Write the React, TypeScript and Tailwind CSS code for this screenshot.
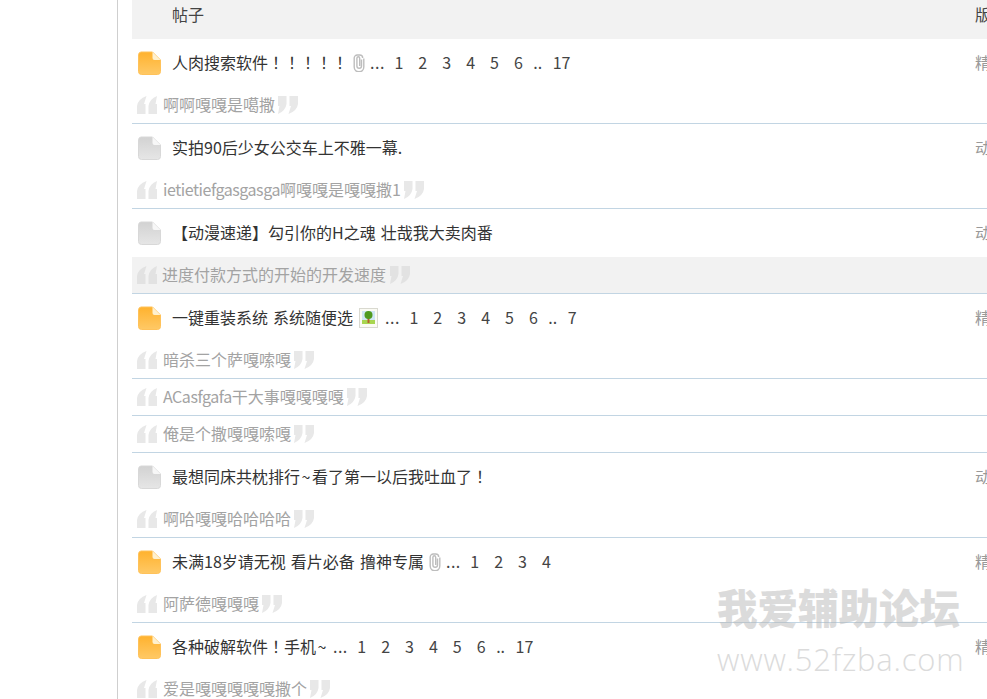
const CJK = "font-['Noto_Sans_CJK_SC','Open_Sans',sans-serif]";

function DocIcon({ hot }: { hot: boolean }) {
  const id = hot ? "docHot" : "docGray";
  return (
    <svg width="23" height="24" viewBox="0 0 23 24" className="shrink-0">
      <defs>
        <linearGradient id={id} x1="0" y1="0" x2="0" y2="1">
          <stop offset="0" stopColor={hot ? "#ffb22e" : "#d2d2d2"} />
          <stop offset="1" stopColor={hot ? "#ffc966" : "#e6e6e6"} />
        </linearGradient>
      </defs>
      <path
        d="M3 1H14.500L22.500 9V20.500a3 3 0 0 1-3 3H3.500a3 3 0 0 1-3-3V3.500a3 3 0 0 1 2.500-2.500Z"
        fill={`url(#${id})`}
        stroke={hot ? "#ffc25a" : "#d8d8d8"}
      />
      <path d="M14.500 1 22.500 9H16.500a2 2 0 0 1-2-2Z" fill={hot ? "#fff1cf" : "#f7f7f7"} />
    </svg>
  );
}

function Clip() {
  return (
    <svg width="12" height="18" viewBox="0 0 12 18" className="shrink-0">
      <path
        d="M8.500 5.500V12a2.300 2.300 0 0 1-4.600 0V4.200a1.400 1.400 0 0 1 2.800 0V12M10.800 4.500V13a4.800 4.800 0 0 1-9.600 0V4a3 3 0 0 1 3-3h2.500a3 3 0 0 1 3 3"
        fill="none"
        stroke="#bdbdbd"
        strokeWidth="1.4"
      />
    </svg>
  );
}

function ImageIcon() {
  return (
    <svg width="19" height="20" viewBox="0 0 19 20" className="shrink-0">
      <rect x=".5" y=".5" width="18" height="19" fill="#fbfbf4" stroke="#d9d9d0" />
      <rect x="3" y="3" width="13" height="9" fill="#cfe6f5" />
      <rect x="3" y="12" width="13" height="4" fill="#a8d64f" />
      <rect x="8.500" y="10" width="2" height="5" fill="#b5622a" />
      <circle cx="9.500" cy="7" r="4" fill="#4f9a1f" />
    </svg>
  );
}

function Quote({ close, tone }: { close?: boolean; tone: string }) {
  return (
    <svg width="20" height="18" viewBox="0 0 20 18" className={close ? "shrink-0 rotate-180" : "shrink-0"}>
      <path d="M0 18V10Q1 3 9.500 0L7 8H8.500V18Z" fill={tone} />
      <path d="M11.500 18V10Q12.500 3 20 0L18.500 8H20V18Z" fill={tone} />
    </svg>
  );
}

function CommentText({ text }: { text: string }) {
  return (
    <>
      {text.split(/([A-Za-z]+)/).map((part, i) =>
        /^[A-Za-z]+$/.test(part) ? (
          <span key={i} className="tracking-[-0.45px]">
            {part}
          </span>
        ) : (
          part
        )
      )}
    </>
  );
}

function Comment({ text, active }: { text: string; active?: boolean }) {
  const tone = active ? "#e2e2e2" : "#e8e8e8";
  return (
    <div
      className={`flex h-[37px] items-center border-b border-[#c2d5e3] pl-[5px] text-[16px] leading-none text-[#a3a3a3] ${
        active ? "bg-[#f2f2f2]" : ""
      }`}
    >
      <Quote tone={tone} />
      <span className={active ? "ml-[5px] mr-[4px] pb-[2px]" : "ml-[6px] mr-[3px] pb-[2px]"}>
        <CommentText text={text} />
      </span>
      <Quote close tone={tone} />
    </div>
  );
}

function Title({ text }: { text: string }) {
  return (
    <span className="whitespace-pre [word-spacing:1.5px]">
      {text.split(/([！~])/).map((part, i) =>
        part === "！" ? (
          <span key={i} className="font-['Noto_Sans_CJK_TC',sans-serif]">
            {part}
          </span>
        ) : part === "~" ? (
          <span key={i} className="mx-[1.5px]">
            {part}
          </span>
        ) : (
          part
        )
      )}
    </span>
  );
}

function Pages({ items }: { items: string[] }) {
  return (
    <span className="flex items-center text-[#444]">
      {items.map((p, i) =>
        p === "..." ? (
          <span key={i} className="ml-[5px] mr-[2px] tracking-[0.5px]">
            {p}
          </span>
        ) : p === ".." ? (
          <span key={i} className="mx-[3px]">
            {p}
          </span>
        ) : (
          <span key={i} className="px-[7.5px]">
            {p}
          </span>
        )
      )}
    </span>
  );
}

type Row = {
  hot: boolean;
  title: string;
  extra?: "clip" | "image";
  pages?: string[];
  tag: string;
  comments: { text: string; active?: boolean }[];
};

const rows: Row[] = [
  {
    hot: true,
    title: "人肉搜索软件！！！！！",
    extra: "clip",
    pages: ["...", "1", "2", "3", "4", "5", "6", "..", "17"],
    tag: "精",
    comments: [{ text: "啊啊嘎嘎是噶撒" }],
  },
  { hot: false, title: "实拍90后少女公交车上不雅一幕.", tag: "动", comments: [{ text: "ietietiefgasgasga啊嘎嘎是嘎嘎撒1" }] },
  {
    hot: false,
    title: "【动漫速递】勾引你的H之魂 壮哉我大卖肉番",
    tag: "动",
    comments: [{ text: "进度付款方式的开始的开发速度", active: true }],
  },
  {
    hot: true,
    title: "一键重装系统 系统随便选",
    extra: "image",
    pages: ["...", "1", "2", "3", "4", "5", "6", "..", "7"],
    tag: "精",
    comments: [{ text: "暗杀三个萨嘎嗦嘎" }, { text: "ACasfgafa干大事嘎嘎嘎嘎" }, { text: "俺是个撒嘎嘎嗦嘎" }],
  },
  { hot: false, title: "最想同床共枕排行~看了第一以后我吐血了！", tag: "动", comments: [{ text: "啊哈嘎嘎哈哈哈哈" }] },
  {
    hot: true,
    title: "未满18岁请无视 看片必备 撸神专属",
    extra: "clip",
    pages: ["...", "1", "2", "3", "4"],
    tag: "精",
    comments: [{ text: "阿萨德嘎嘎嘎" }],
  },
  {
    hot: true,
    title: "各种破解软件！手机~",
    pages: ["...", "1", "2", "3", "4", "5", "6", "..", "17"],
    tag: "精",
    comments: [{ text: "爱是嘎嘎嘎嘎嘎撒个" }],
  },
];

export default function App() {
  return (
    <div className={`relative h-[699px] w-[987px] overflow-hidden bg-white ${CJK}`}>
      <div className="ml-[117px] h-full w-[920px] border-l border-[#cfcfcf] pl-[14px]">
        <div className="flex h-[39px] bg-[#f2f2f2] pt-[4px] text-[16px] leading-[20px] text-[#444]">
          <div className="w-[843px] pl-[40px]">帖子</div>
          <div>版块</div>
        </div>
        {rows.map((r) => (
          <div key={r.title}>
            <div className="flex h-[48px] items-center text-[16px] leading-none">
              <div className="flex w-[843px] items-center pl-[6px]">
                <DocIcon hot={r.hot} />
                <div className="ml-[11px] flex items-center text-[#333]">
                  <span className="flex items-center pb-[2px]">
                    <Title text={r.title} />
                  </span>
                  {r.extra === "clip" && (
                    <span className="ml-[5px] flex">
                      <Clip />
                    </span>
                  )}
                  {r.extra === "image" && (
                    <span className="ml-[6px] mr-[2px] flex">
                      <ImageIcon />
                    </span>
                  )}
                  {r.pages && (
                    <span className="pb-[2px]">
                      <Pages items={r.pages} />
                    </span>
                  )}
                </div>
              </div>
              <div className="pb-[2px] text-[#999]">{r.tag}块</div>
            </div>
            {r.comments.map((c) => (
              <Comment key={c.text} text={c.text} active={c.active} />
            ))}
          </div>
        ))}
      </div>
      <div className="pointer-events-none absolute left-[717px] top-[584px] w-[250px]">
        <div className="text-[40.5px] font-black leading-[46px] text-[#b8b8b8] opacity-50 font-['Noto_Sans_CJK_SC',sans-serif]">
          我爱辅助论坛
        </div>
        <div className="mt-[10px] text-[31px] leading-[38px] tracking-[0.8px] text-[#b8b8b8] opacity-50 font-['Open_Sans',sans-serif] font-light">
          www.52fzba.com
        </div>
      </div>
    </div>
  );
}
